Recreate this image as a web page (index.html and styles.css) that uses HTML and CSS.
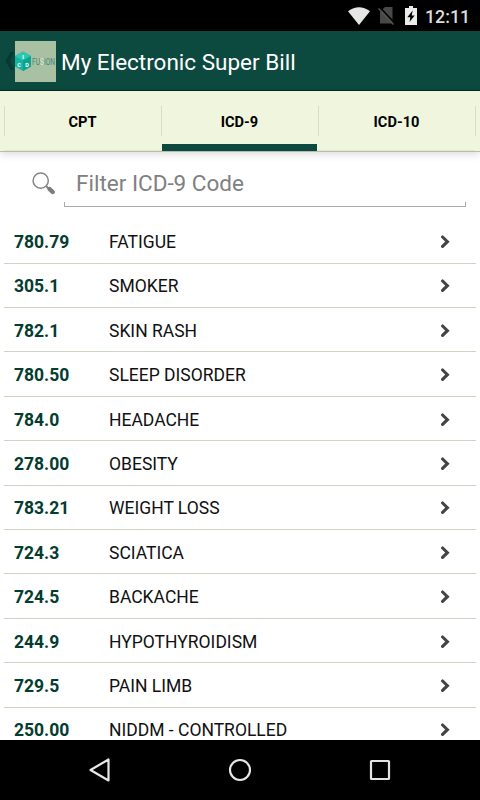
FILE: index.html
```
<!DOCTYPE html>
<html lang="en">
<head>
  <meta charset="UTF-8">
  <meta name="viewport" content="width=device-width, initial-scale=1.0">
  <title>My Electronic Super Bill</title>
  <link rel="stylesheet" href="styles.css">
</head>
<body>
  <div class="status-bar">
    <svg class="wifi" width="22" height="18" viewBox="0 0 22 18"><path d="M0 4.2Q11 -3.8 22 4.2L11 18Z" fill="#e6e6e6"/></svg>
    <svg class="no-sim" width="17" height="19" viewBox="0 0 17 19">
      <path d="M7 1H14.5V17.5H2V6Z" fill="#484848"/>
      <path d="M2 1.5L17 17.5" stroke="#000" stroke-width="1.6"/>
      <path d="M0.5 2.5L15.5 18.5" stroke="#555" stroke-width="1.3"/>
    </svg>
    <svg class="battery" width="12" height="19" viewBox="0 0 12 19">
      <path d="M4 0H8V2H12V19H0V2H4Z" fill="#ececec"/>
      <path d="M7.7 4.5L2.3 11.2H5.3L4.5 16L9.7 9.4H6.7Z" fill="#000"/>
    </svg>
    <span class="clock">12:11</span>
  </div>

  <header class="action-bar">
    <svg class="back" width="10" height="20" viewBox="0 0 10 20"><path d="M5.5 1H9L5 10L9 19H5.5L0.5 10Z" fill="#083a33"/></svg>
    <svg class="logo" width="41" height="41" viewBox="0 0 41 41">
      <rect width="41" height="41" fill="#a9c1a2"/>
      <path d="M8 10.5L16 15V25.5L8 30L0 25.5V15Z" fill="#14b5a0"/>
      <path d="M8 10.5L16 15L8 19.5L0 15Z" fill="#2bc7b2"/>
      <path d="M8 19.5L16 15V25.5L8 30Z" fill="#0ca491"/>
      <text class="logo-cube" x="8" y="17.5">I</text>
      <text class="logo-cube" x="4" y="25.5">C</text>
      <text class="logo-cube" x="12" y="25.5">D</text>
      <text class="logo-name" x="17" y="24" textLength="23" lengthAdjust="spacingAndGlyphs">FU<tspan fill="#d7e5d5">S</tspan>ION</text>
    </svg>
    <h1>My Electronic Super Bill</h1>
  </header>

  <nav class="tabs">
    <a class="tab">CPT</a>
    <a class="tab active">ICD-9</a>
    <a class="tab">ICD-10</a>
  </nav>

  <div class="search">
    <svg class="search-icon" width="24" height="24" viewBox="0 0 24 24">
      <circle cx="8.7" cy="8.7" r="7.6" fill="none" stroke="#858585" stroke-width="1.5"/>
      <path d="M14 14L17 17" stroke="#858585" stroke-width="2"/>
      <path d="M17.5 17L20.7 20" stroke="#7c7c7c" stroke-width="4.4" stroke-linecap="round"/>
    </svg>
    <div class="search-field">
      <span>Filter ICD-9 Code</span>
    </div>
  </div>

  <svg width="0" height="0" class="defs">
    <symbol id="chevron" viewBox="0 0 10 14"><path d="M2.6 2L7.4 6.7L2.6 11.4" fill="none" stroke="#444446" stroke-width="3.1" stroke-linecap="round"/></symbol>
  </svg>

  <div class="codes">
    <div class="row"><b>780.79</b><span>FATIGUE</span><svg class="arrow"><use href="#chevron"/></svg></div>
    <div class="row"><b>305.1</b><span>SMOKER</span><svg class="arrow"><use href="#chevron"/></svg></div>
    <div class="row"><b>782.1</b><span>SKIN RASH</span><svg class="arrow"><use href="#chevron"/></svg></div>
    <div class="row"><b>780.50</b><span>SLEEP DISORDER</span><svg class="arrow"><use href="#chevron"/></svg></div>
    <div class="row"><b>784.0</b><span>HEADACHE</span><svg class="arrow"><use href="#chevron"/></svg></div>
    <div class="row"><b>278.00</b><span>OBESITY</span><svg class="arrow"><use href="#chevron"/></svg></div>
    <div class="row"><b>783.21</b><span>WEIGHT LOSS</span><svg class="arrow"><use href="#chevron"/></svg></div>
    <div class="row"><b>724.3</b><span>SCIATICA</span><svg class="arrow"><use href="#chevron"/></svg></div>
    <div class="row"><b>724.5</b><span>BACKACHE</span><svg class="arrow"><use href="#chevron"/></svg></div>
    <div class="row"><b>244.9</b><span>HYPOTHYROIDISM</span><svg class="arrow"><use href="#chevron"/></svg></div>
    <div class="row"><b>729.5</b><span>PAIN LIMB</span><svg class="arrow"><use href="#chevron"/></svg></div>
    <div class="row"><b>250.00</b><span>NIDDM - CONTROLLED</span><svg class="arrow"><use href="#chevron"/></svg></div>
  </div>

  <footer class="nav-bar">
    <svg width="24" height="26" viewBox="0 0 24 26"><path d="M20.5 2.5V23.5L2.5 13Z" fill="none" stroke="#e8e8e8" stroke-width="2.2" stroke-linejoin="round"/></svg>
    <svg width="24" height="26" viewBox="0 0 24 26"><circle cx="12" cy="13" r="10" fill="none" stroke="#e8e8e8" stroke-width="2.1"/></svg>
    <svg width="24" height="26" viewBox="0 0 24 26"><rect x="3" y="4" width="18" height="18" rx="0.5" fill="none" stroke="#e4e4e4" stroke-width="2.2"/></svg>
  </footer>
</body>
</html>
```
FILE: styles.css
```
* {
  box-sizing: border-box;
}

body {
  margin: 0;
  width: 480px;
  height: 800px;
  display: flex;
  flex-direction: column;
  overflow: hidden;
  background: #fff;
  font-family: Roboto, "Liberation Sans", sans-serif;
}

svg {
  flex: none;
}

.defs {
  display: none;
}

/* Status bar */
.status-bar {
  flex: none;
  height: 31px;
  padding: 0 11px 0 348px;
  display: flex;
  align-items: center;
  background: #000;
}

.no-sim {
  margin-left: 8px;
}

.battery {
  margin-left: 10px;
}

.clock {
  margin: 2px 0 0 8px;
  color: #dcdcdc;
  font-size: 17.8px;
  font-weight: 500;
  line-height: 20px;
}

/* Header */
.action-bar {
  flex: none;
  height: 60px;
  padding: 1px 0 0 5px;
  display: flex;
  align-items: center;
  background: #0c493f;
  border-bottom: 1px solid #052b25;
}

.logo {
  overflow: visible;
}

.logo-cube {
  fill: #fff;
  font-size: 5.6px;
  font-weight: 700;
  text-anchor: middle;
}

.logo-name {
  fill: #3b8878;
  font-size: 8.2px;
}

.action-bar h1 {
  margin: 1px 0 0 5px;
  color: #fff;
  font-size: 22.5px;
  font-weight: 400;
  line-height: 28px;
  white-space: nowrap;
}

/* Tabs */
.tabs {
  flex: none;
  height: 61px;
  padding: 0 5px 0 4px;
  display: flex;
  background: linear-gradient(#d9dbc4, #d9dbc4) 475px 15px / 1px 30px no-repeat #f0f5dd;
  border-bottom: 1px solid #b9bbaf;
  box-shadow: 0 2px 8px rgba(0, 0, 0, 0.15);
}

.tab {
  flex: 1;
  padding-top: 21px;
  background:
    linear-gradient(#d9dbc4, #d9dbc4) left 15px / 1px 30px no-repeat,
    linear-gradient(#e2e7cf, #e2e7cf) left bottom / 100% 1px no-repeat;
  color: #000;
  font-size: 14.6px;
  font-weight: 700;
  line-height: 20px;
  text-align: center;
}

.tab.active {
  background:
    linear-gradient(#d9dbc4, #d9dbc4) left 15px / 1px 30px no-repeat,
    linear-gradient(#0c493f, #0c493f) 1px bottom / 155px 7px no-repeat;
}

/* Search */
.search {
  flex: none;
  height: 67.3px;
  padding: 14px 14px 12px 32px;
  display: flex;
}

.search-icon {
  margin-top: 6px;
}

.search-field {
  flex: 1;
  height: 41px;
  margin-left: 8px;
  padding: 3px 12px 0;
  background:
    linear-gradient(#aaa, #aaa) left bottom / 1px 4px no-repeat,
    linear-gradient(#aaa, #aaa) right bottom / 1px 4px no-repeat;
  border-bottom: 1px solid #aaa;
  color: #808080;
  font-size: 22.5px;
  line-height: 28px;
}

/* Code list */
.codes {
  flex: 1;
  min-height: 0;
  padding: 0 4px;
  overflow: hidden;
}

.row {
  height: 44.4px;
  padding: 2px 26px 0 10px;
  display: flex;
  align-items: center;
  border-bottom: 1px solid #cbd5c3;
  font-size: 17.5px;
  line-height: 22px;
}

.row b {
  width: 95px;
  color: #043c30;
}

.row span {
  flex: 1;
  color: #111;
}

.arrow {
  width: 10px;
  height: 14px;
}

/* Navigation bar */
.nav-bar {
  flex: none;
  height: 60px;
  padding: 0 88px;
  display: flex;
  align-items: center;
  justify-content: space-between;
  background: #000;
}
```
